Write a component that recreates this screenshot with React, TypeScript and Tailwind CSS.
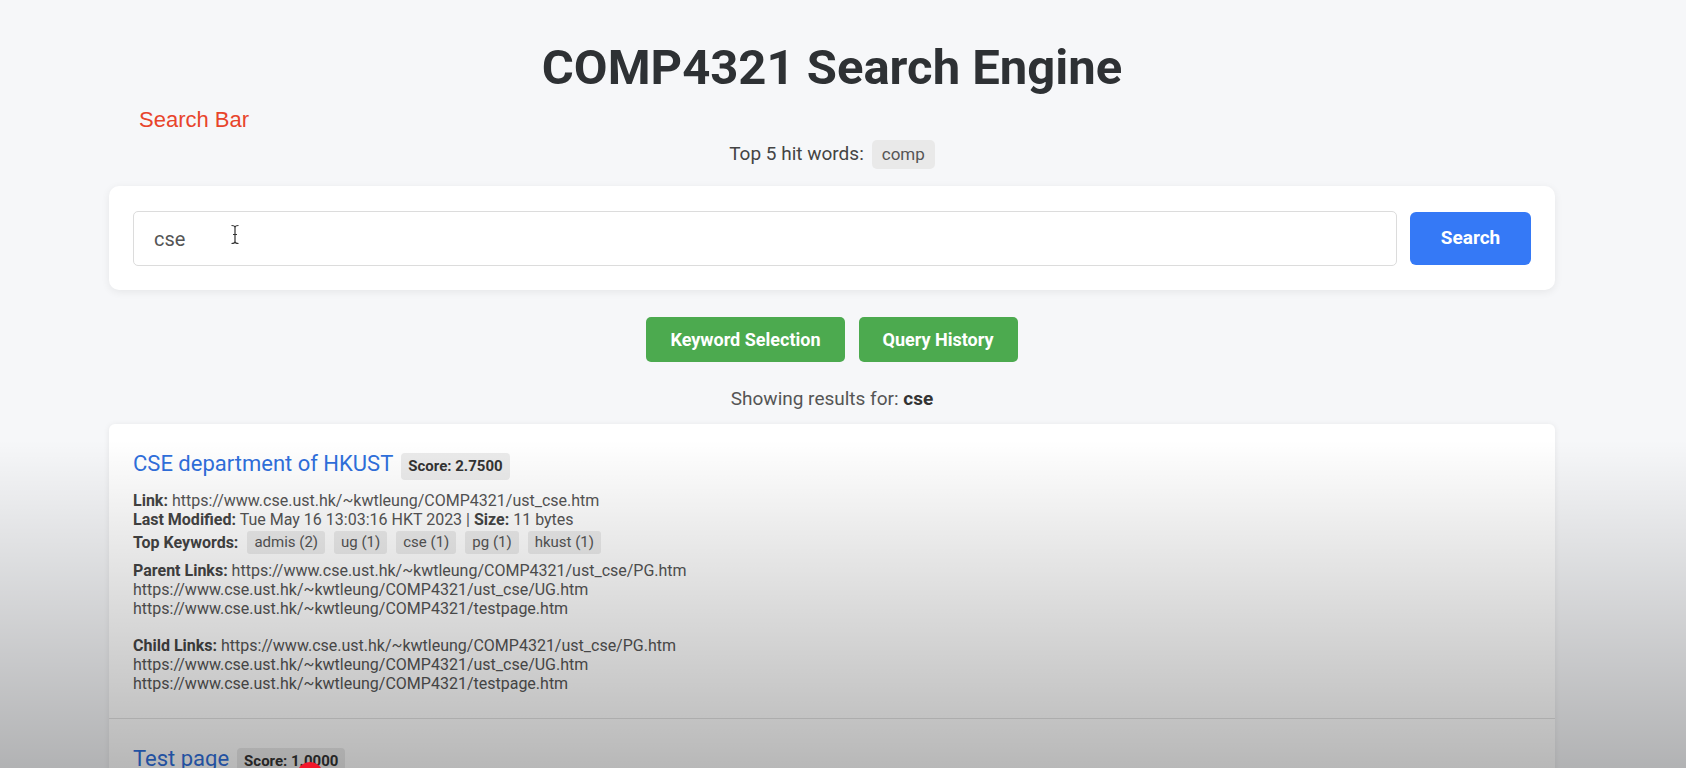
import React from "react";

type Result = {
  title: string;
  score: string;
  link: string;
  modified: string;
  size: string;
  keywords: string[];
  parents: string[];
  children: string[];
};

const base = "https://www.cse.ust.hk/~kwtleung/COMP4321";

const results: Result[] = [
  {
    title: "CSE department of HKUST",
    score: "2.7500",
    link: `${base}/ust_cse.htm`,
    modified: "Tue May 16 13:03:16 HKT 2023",
    size: "11 bytes",
    keywords: ["admis (2)", "ug (1)", "cse (1)", "pg (1)", "hkust (1)"],
    parents: [`${base}/ust_cse/PG.htm`, `${base}/ust_cse/UG.htm`, `${base}/testpage.htm`],
    children: [`${base}/ust_cse/PG.htm`, `${base}/ust_cse/UG.htm`, `${base}/testpage.htm`],
  },
  {
    title: "Test page",
    score: "1.0000",
    link: `${base}/testpage.htm`,
    modified: "Tue May 16 13:03:16 HKT 2023",
    size: "603 bytes",
    keywords: ["test (2)", "page (1)", "cse (1)", "comp (1)", "ust (1)"],
    parents: [`${base}/ust_cse.htm`],
    children: [`${base}/ust_cse.htm`, `${base}/news.htm`, `${base}/books.htm`],
  },
];

function ResultItem({ r, last }: { r: Result; last: boolean }) {
  return (
    <div className={`px-[24px] py-[25px] ${last ? "" : "border-b border-[#e2e2e2]"}`}>
      <div className="flex h-[30px] items-center">
        <span className="text-[22px] leading-[30px] text-[#2f6fdc]">{r.title}</span>
        <span className="ml-[8px] mt-[4px] flex h-[27px] items-center rounded-[4px] bg-[#ebebeb] px-[7px] text-[15px] font-bold text-[#333]">
          Score: {r.score}
        </span>
      </div>
      <div className="mt-[12px] text-[16px] leading-[19px] text-[#555]">
        <div>
          <b className="text-[#444]">Link:</b> {r.link}
        </div>
        <div>
          <b className="text-[#444]">Last Modified:</b> {r.modified} | <b className="text-[#444]">Size:</b>{" "}
          {r.size}
        </div>
        <div className="mt-[2px] flex h-[23px] items-center gap-[9px]">
          <b className="text-[#444]">Top Keywords:</b>
          {r.keywords.map((k) => (
            <span
              key={k}
              className="flex h-[23px] items-center rounded-[3px] bg-[#ececec] px-[7px] text-[15px] text-[#555]"
            >
              {k}
            </span>
          ))}
        </div>
        <div className="mt-[7px]">
          <b className="text-[#444]">Parent Links:</b>{" "}
          {r.parents.map((p, i) => (
            <div key={i} className={i === 0 ? "inline" : ""}>
              {p}
            </div>
          ))}
        </div>
        <div className="mt-[18px]">
          <b className="text-[#444]">Child Links:</b>{" "}
          {r.children.map((c, i) => (
            <div key={i} className={i === 0 ? "inline" : ""}>
              {c}
            </div>
          ))}
        </div>
      </div>
    </div>
  );
}

export default function App() {
  return (
    <div className="relative h-[768px] overflow-hidden bg-[#f6f7f9] font-['Roboto',sans-serif]">
      <div className="ml-[109px] w-[1446px]">
        <h1 className="pt-[40px] text-center text-[49px] font-bold leading-[56px] text-[#2e3134]">
          COMP4321 Search Engine
        </h1>

        <div className="ml-[30px] mt-[11px] font-['Liberation_Sans',sans-serif] text-[22px] leading-[26px] text-[#e8442b]">
          Search Bar
        </div>

        <div className="mt-[7px] flex items-center justify-center gap-[8px]">
          <span className="text-[19px] text-[#444]">Top 5 hit words:</span>
          <span className="flex h-[29px] items-center rounded-[5px] bg-[#e9e9e9] px-[10px] text-[17px] text-[#555]">
            comp
          </span>
        </div>

        <div className="mt-[17px] flex items-center gap-[13px] rounded-[10px] bg-white px-[24px] pb-[24px] pt-[25px] shadow-[0_2px_8px_rgba(0,0,0,0.07)]">
          <div className="relative flex h-[55px] flex-1 items-center rounded-[5px] border border-[#dcdcdc] bg-white px-[20px] text-[20px] text-[#555]">
            cse
            <svg
              className="absolute left-[96px] top-[12px]"
              width="10"
              height="21"
              viewBox="0 0 10 21"
              fill="none"
              stroke="#333"
              strokeWidth="1.2"
            >
              <path d="M1.5 1.5c2 0 3.5.6 3.5 2v14c0 1.4-1.5 2-3.5 2M8.5 1.5c-2 0-3.5.6-3.5 2v14c0 1.4 1.5 2 3.5 2M3 10.5h4" />
            </svg>
          </div>
          <button className="h-[53px] w-[121px] rounded-[6px] bg-[#3579f6] text-[19px] font-bold text-white">
            Search
          </button>
        </div>

        <div className="mt-[27px] flex justify-center gap-[14px]">
          <button className="h-[45px] rounded-[5px] bg-[#4caa4f] px-[24px] text-[18px] font-bold text-white">
            Keyword Selection
          </button>
          <button className="h-[45px] rounded-[5px] bg-[#4caa4f] px-[24px] text-[18px] font-bold text-white">
            Query History
          </button>
        </div>

        <div className="mt-[25px] text-center text-[19px] leading-[24px] text-[#555]">
          Showing results for: <b className="text-[#333]">cse</b>
        </div>

        <div className="mt-[13px] rounded-[6px] bg-white shadow-[0_1px_6px_rgba(0,0,0,0.08)]">
          {results.map((r, i) => (
            <ResultItem key={i} r={r} last={i === results.length - 1} />
          ))}
        </div>
      </div>

      <div className="pointer-events-none absolute inset-x-0 bottom-0 top-[440px] bg-linear-to-b from-transparent to-[rgba(0,0,0,0.28)]" />
      <div className="pointer-events-none absolute left-[297px] top-[762px] h-[26px] w-[26px] rounded-full bg-[#f2162a]" />
    </div>
  );
}
